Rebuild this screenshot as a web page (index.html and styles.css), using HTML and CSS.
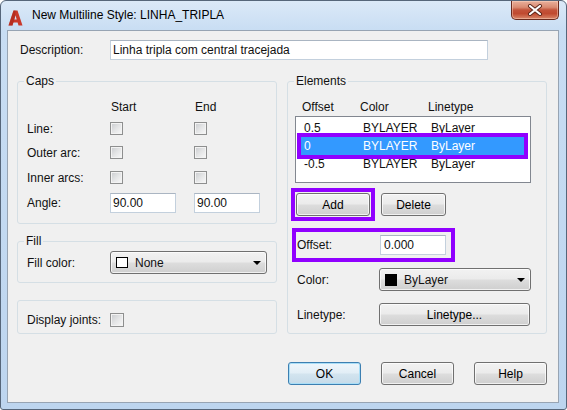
FILE: index.html
```html
<!DOCTYPE html>
<html>
<head>
<meta charset="utf-8">
<link rel="stylesheet" href="styles.css">
</head>
<body>
<div class="window">
  <div class="titlebar">
    <svg class="app-icon" width="15" height="16" viewBox="0 0 15 16">
      <path d="M0.5 15.5 L5.5 0.5 L9.5 0.5 L14.5 15.5 L10.5 15.5 L9.6 12.5 L5.4 12.5 L4.5 15.5 Z M6.3 9.5 L8.7 9.5 L7.5 5.2 Z" fill="#c9392b" fill-rule="evenodd"/>
      <path d="M0.5 15.5 L5.5 0.5 L7.5 0.5 L7.5 5.2 L6.3 9.5 L5.4 12.5 L4.5 15.5 Z" fill="#a52619" opacity="0.55"/>
    </svg>
    <span class="title">New Multiline Style: LINHA_TRIPLA</span>
    <div class="close">
      <svg width="16" height="12" viewBox="0 0 16 12">
        <path d="M3 2 L13 10 M13 2 L3 10" stroke="#5a2418" stroke-width="4" stroke-linecap="round"/>
        <path d="M3 2 L13 10 M13 2 L3 10" stroke="#ffffff" stroke-width="2.2" stroke-linecap="round"/>
      </svg>
    </div>
  </div>
  <div class="client">
    <div class="desc-row">
      <span class="desc-label">Description:</span>
      <div class="textbox desc-input">Linha tripla com central tracejada</div>
    </div>
    <div class="columns">
      <div class="col">
        <fieldset class="group caps">
          <legend>Caps</legend>
          <div class="caps-grid">
            <span></span><span class="hdr">Start</span><span class="hdr">End</span>
            <span>Line:</span><span class="check"></span><span class="check"></span>
            <span>Outer arc:</span><span class="check"></span><span class="check"></span>
            <span>Inner arcs:</span><span class="check"></span><span class="check"></span>
            <span>Angle:</span><div class="textbox angle">90.00</div><div class="textbox angle">90.00</div>
          </div>
        </fieldset>
        <fieldset class="group fill">
          <legend>Fill</legend>
          <div class="line-row">
            <span class="left-label">Fill color:</span>
            <div class="combo fill-combo"><span class="swatch white"></span><span>None</span><span class="arrow"></span></div>
          </div>
        </fieldset>
        <div class="group joints">
          <span class="left-label">Display joints:</span>
          <span class="check"></span>
        </div>
      </div>
      <div class="col">
        <fieldset class="group elements">
          <legend>Elements</legend>
          <div class="el-header"><span>Offset</span><span>Color</span><span>Linetype</span></div>
          <div class="list">
            <div class="lrow"><span>0.5</span><span>BYLAYER</span><span>ByLayer</span></div>
            <div class="lrow sel"><span>0</span><span>BYLAYER</span><span>ByLayer</span></div>
            <div class="lrow"><span>-0.5</span><span>BYLAYER</span><span>ByLayer</span></div>
          </div>
          <div class="btn-row">
            <div class="mark add-wrap"><div class="btn add">Add</div></div>
            <div class="btn del">Delete</div>
          </div>
          <div class="prop-row offset mark">
            <span class="prop-label">Offset:</span>
            <div class="textbox off-input">0.000</div>
          </div>
          <div class="prop-row color">
            <span class="prop-label">Color:</span>
            <div class="combo color-combo"><span class="swatch black"></span><span>ByLayer</span><span class="arrow"></span></div>
          </div>
          <div class="prop-row lt">
            <span class="prop-label">Linetype:</span>
            <div class="btn lt-btn">Linetype...</div>
          </div>
        </fieldset>
        <div class="dlg-buttons">
          <div class="btn ok">OK</div>
          <div class="btn">Cancel</div>
          <div class="btn">Help</div>
        </div>
      </div>
    </div>
  </div>
</div>
</body>
</html>
```
FILE: styles.css
```css
* { box-sizing: border-box; }
html, body { margin: 0; padding: 0; }
body {
  width: 567px; height: 410px; overflow: hidden; background: #ffffff;
  font-family: "Liberation Sans", Arial, sans-serif; font-size: 12px; color: #111;
}
.window {
  width: 567px; height: 410px;
  background: linear-gradient(180deg, #dbe9f8 0px, #c8ddf3 30px, #bdd5ef 100%);
  border: 1px solid #56667a;
  border-radius: 6px 6px 3px 3px;
  padding: 0 7px 6px 6px;
  display: flex; flex-direction: column;
}
.titlebar { height: 29px; display: flex; align-items: flex-start; }
.app-icon { margin-left: 1px; margin-top: 9px; flex: none; }
.title { margin-left: 9px; margin-top: 7px; line-height: 15px; color: #000; }
.close {
  margin-left: auto; width: 48px; height: 19px; flex: none;
  border: 1px solid #6a2a1e; border-top: none;
  border-radius: 0 0 5px 5px;
  background: linear-gradient(180deg, #e9b09c 0%, #d98b72 35%, #c3533a 50%, #c04a30 70%, #d9876a 100%);
  box-shadow: inset 0 0 0 1px rgba(255,220,200,0.45);
  display: flex; align-items: center; justify-content: center;
}
.client {
  flex: 1; background: #f0f0f0; border: 1px solid #97a4b3;
  padding: 9px 0 0 9px;
}
.desc-row { display: flex; align-items: center; padding-left: 3px; }
.desc-label { width: 90px; }
.textbox {
  background: #fff; border: 1px solid #c3d0dd; border-top-color: #aab5c2;
  padding-left: 2px; height: 20px; line-height: 18px;
}
.desc-input { width: 378px; }
.columns { display: flex; gap: 10px; margin-top: 14px; }
.col { width: 260px; flex: none; }
.group {
  margin: 0; min-width: 0; border: 1px solid #d5dfe5; border-radius: 3px;
}
legend { padding: 0 2px; line-height: 14px; height: 14px; margin-left: -3px; }
.caps { padding: 8px 9px 8px 9px; }
.caps-grid {
  display: grid; grid-template-columns: 83px 84px 1fr;
  grid-template-rows: 21px 23px 25px 25px 25px; align-items: center;
}
.hdr { padding-left: 1px; }
.check {
  width: 13px; height: 13px; border: 1px solid #8e8f8f;
  background: linear-gradient(135deg, #c9cbce 0%, #e4e5e6 50%, #f9f9f9 100%);
  box-shadow: inset 0 0 0 1px #f3f3f3;
}
.angle { width: 66px; height: 20px; }
.fill { margin-top: 10px; padding: 3px 9px 8px 9px; }
.line-row { display: flex; align-items: center; }
.left-label { width: 83px; flex: none; }
.combo {
  height: 23px; border: 1px solid #707070; border-radius: 3px;
  background: linear-gradient(180deg, #f2f2f2 0%, #ebebeb 48%, #dddddd 52%, #cfcfcf 100%);
  box-shadow: inset 0 0 0 1px rgba(255,255,255,0.7);
  display: flex; align-items: center; padding-left: 5px;
}
.fill-combo { width: 159px; }
.swatch { width: 12px; height: 12px; border: 1px solid #000; margin-right: 7px; flex: none; }
.swatch.white { background: #fff; width: 12px; height: 11px; }
.swatch.black { background: #000; }
.arrow {
  margin-left: auto; margin-right: 5px; width: 0; height: 0;
  border-left: 4px solid transparent; border-right: 4px solid transparent; border-top: 4px solid #000;
}
.joints { margin-top: 17px; padding: 12px 9px 6px 9px; display: flex; align-items: center; }
.joints .check { width: 14px; height: 14px; }
.elements { padding: 9px 15px 7px 7px; }
.elements legend { margin-left: -1px; }
.el-header {
  display: grid; grid-template-columns: 58px 68px 1fr; padding-left: 7px;
  height: 19px; align-items: center;
}
.list {
  height: 67px; background: #fff; border: 1px solid #828790;
  padding: 2px 6px 0 5px;
}
.lrow {
  display: grid; grid-template-columns: 59px 68px 1fr; padding-left: 3px;
  height: 18px; line-height: 18px;
}
.lrow.sel { background: #3399ff; color: #fff; outline: 4px solid #9000ff; }
.btn {
  height: 23px; width: 73px; border: 1px solid #707070; border-radius: 3px;
  background: linear-gradient(180deg, #f2f2f2 0%, #ebebeb 48%, #dddddd 52%, #cfcfcf 100%);
  box-shadow: inset 0 0 0 1px rgba(255,255,255,0.7);
  display: flex; align-items: center; justify-content: center; color: #000;
}
.btn-row { display: flex; align-items: center; gap: 10px; margin-top: 9px; }
.add-wrap { padding: 1px; }
.btn.add { width: 74px; }
.btn.del { width: 65px; }
.mark { outline: 4px solid #9000ff; }
.prop-row { display: flex; align-items: center; }
.prop-label { width: 84px; flex: none; padding-left: 2px; }
.offset { margin-top: 15px; margin-left: 1px; width: 155px; height: 26px; }
.offset .prop-label { padding-left: 1px; }
.off-input { width: 66px; height: 20px; padding-left: 3px; }
.color { margin-top: 10px; }
.color-combo { width: 152px; }
.lt { margin-top: 12px; }
.lt-btn { width: 151px; }
.dlg-buttons { display: flex; gap: 20px; margin-top: 28px; padding-left: 1px; }
.btn.ok {
  border-color: #3c7fb1;
  box-shadow: inset 0 0 0 1px #a9def7;
  background: linear-gradient(180deg, #eef6fb 0%, #e2eef6 48%, #d3e4ef 52%, #c6dbe9 100%);
}
```
